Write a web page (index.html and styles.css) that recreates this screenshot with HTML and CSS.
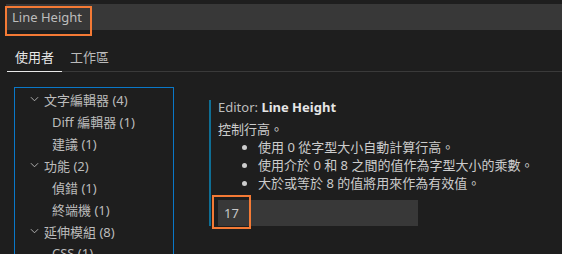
FILE: index.html
```html
<!DOCTYPE html>
<html>
<head>
    <meta charset="utf-8" />
    <title>Settings</title>
    <link rel="stylesheet" href="styles.css">
</head>
<body>
    <div class="searchbar">
        <span class="searchtext">Line Height</span>
        <div class="mark mark-search"></div>
    </div>

    <div class="tabs">
        <div class="tab active">使用者</div>
        <div class="tab">工作區</div>
    </div>

    <div class="main">
        <div class="tree">
            <div class="row"><svg class="chev" viewBox="0 0 10 6"><path d="M1 1 L5 5 L9 1" /></svg>文字編輯器 (4)</div>
            <div class="row child">Diff 編輯器 (1)</div>
            <div class="row child">建議 (1)</div>
            <div class="row"><svg class="chev" viewBox="0 0 10 6"><path d="M1 1 L5 5 L9 1" /></svg>功能 (2)</div>
            <div class="row child">偵錯 (1)</div>
            <div class="row child">終端機 (1)</div>
            <div class="row"><svg class="chev" viewBox="0 0 10 6"><path d="M1 1 L5 5 L9 1" /></svg>延伸模組 (8)</div>
            <div class="row child">CSS (1)</div>
        </div>

        <div class="setting">
            <div class="title">Editor: <b>Line Height</b></div>
            <div class="desc">控制行高。</div>
            <ul class="list">
                <li>使用 0 從字型大小自動計算行高。</li>
                <li>使用介於 0 和 8 之間的值作為字型大小的乘數。</li>
                <li>大於或等於 8 的值將用來作為有效值。</li>
            </ul>
            <div class="inputbox">
                <span class="val">17</span>
                <div class="mark mark-input"></div>
            </div>
        </div>
    </div>
</body>
</html>
```

FILE: styles.css
```css
* {
    margin: 0;
    padding: 0;
    box-sizing: border-box;
}

body {
    background: #1e1e1e;
    color: #cccccc;
    font-family: "Noto Sans", "Noto Sans CJK TC", sans-serif;
    font-size: 13px;
    overflow: hidden;
}

.searchbar {
    position: relative;
    margin: 4px 0 0 6px;
    height: 26px;
    background: #383838;
    padding-left: 6px;
    line-height: 26px;
}

.searchtext {
    color: #bdbdbd;
}

.mark {
    position: absolute;
    border: 2px solid #f47a35;
}

.mark-search {
    left: -1px;
    top: 2px;
    width: 87px;
    height: 30px;
}

.tabs {
    display: flex;
    margin: 13px 0 0 7px;
    border-bottom: 1px solid #3a3a3a;
}

.tab {
    padding: 0 8px;
    line-height: 28px;
    color: #bbbbbb;
}

.tab.active {
    color: #e8e8e8;
    border-bottom: 1px solid #e8e8e8;
    margin-bottom: -1px;
}

.main {
    display: flex;
    margin-top: 15px;
}

.tree {
    width: 160px;
    height: 180px;
    margin-left: 14px;
    border: 1px solid #0a78c8;
    color: #bcbcbc;
}

.row {
    display: flex;
    align-items: center;
    height: 22px;
    padding-left: 29px;
}

.row.child {
    padding-left: 37px;
}

.chev {
    width: 9px;
    height: 6px;
    margin-left: -14px;
    margin-right: 5px;
    fill: none;
    stroke: #bcbcbc;
    stroke-width: 1;
}

.setting {
    margin: 13px 0 0 35px;
    align-self: flex-start;
    border-left: 2px solid #0f6e94;
    padding-left: 7px;
}

.title {
    line-height: 14px;
    color: #bdbdbd;
}

.title b {
    color: #e6e6e6;
    font-weight: 700;
}

.desc {
    margin-top: 6px;
    line-height: 18px;
}

.list {
    padding-left: 40px;
    line-height: 18px;
}

.inputbox {
    position: relative;
    margin-top: 8px;
    width: 200px;
    height: 26px;
    background: #383838;
    padding-left: 6px;
    line-height: 26px;
}

.val {
    color: #c8c8c8;
}

.mark-input {
    left: -6px;
    top: -5px;
    width: 39px;
    height: 34px;
}
```
